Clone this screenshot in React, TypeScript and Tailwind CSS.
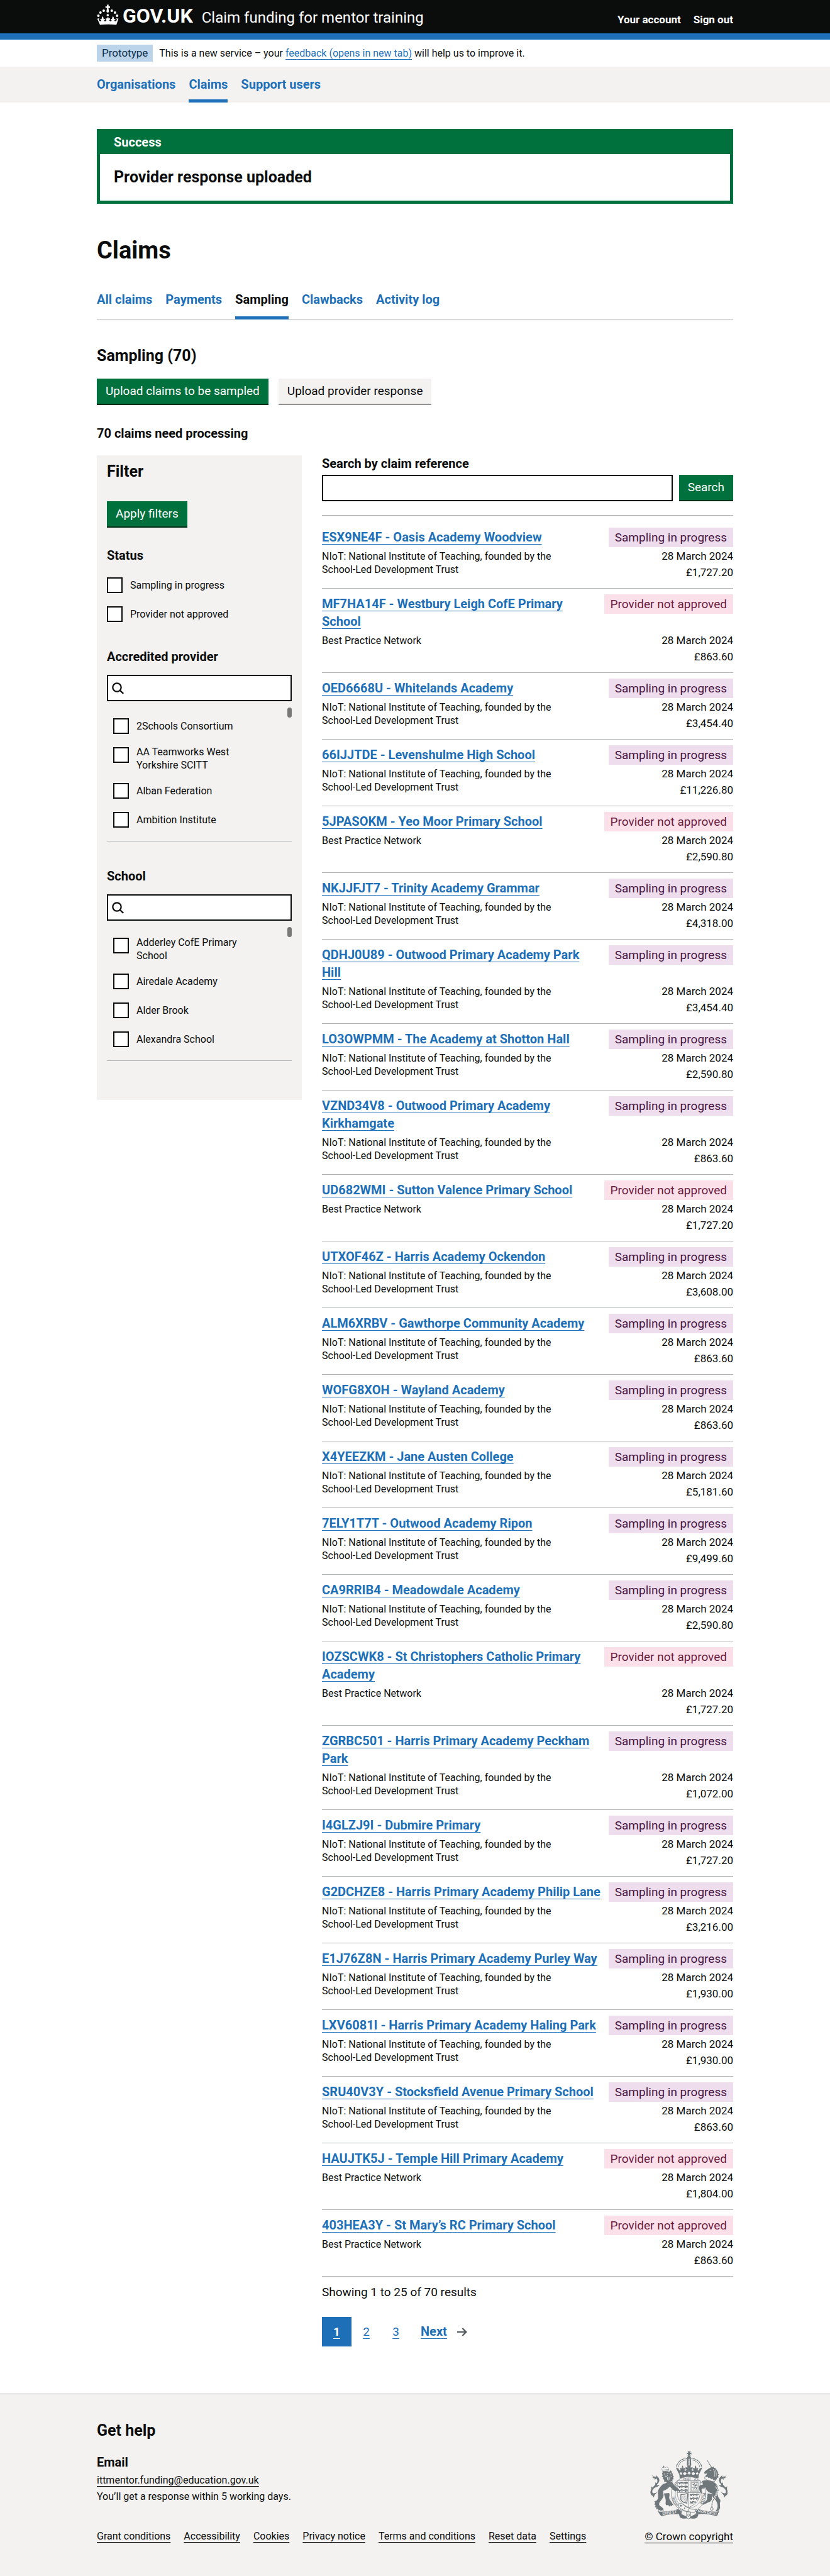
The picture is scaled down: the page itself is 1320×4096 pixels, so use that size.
import type { ReactNode } from "react";

type Status = "progress" | "rejected";
type Claim = { title: string; provider: string; status: Status; amount: string };

const NIOT = "NIoT: National Institute of Teaching, founded by the School-Led Development Trust";
const BPN = "Best Practice Network";

const claims: Claim[] = [
  { title: "ESX9NE4F - Oasis Academy Woodview", provider: NIOT, status: "progress", amount: "£1,727.20" },
  { title: "MF7HA14F - Westbury Leigh CofE Primary\nSchool", provider: BPN, status: "rejected", amount: "£863.60" },
  { title: "OED6668U - Whitelands Academy", provider: NIOT, status: "progress", amount: "£3,454.40" },
  { title: "66IJJTDE - Levenshulme High School", provider: NIOT, status: "progress", amount: "£11,226.80" },
  { title: "5JPASOKM - Yeo Moor Primary School", provider: BPN, status: "rejected", amount: "£2,590.80" },
  { title: "NKJJFJT7 - Trinity Academy Grammar", provider: NIOT, status: "progress", amount: "£4,318.00" },
  { title: "QDHJ0U89 - Outwood Primary Academy Park\nHill", provider: NIOT, status: "progress", amount: "£3,454.40" },
  { title: "LO3OWPMM - The Academy at Shotton Hall", provider: NIOT, status: "progress", amount: "£2,590.80" },
  { title: "VZND34V8 - Outwood Primary Academy\nKirkhamgate", provider: NIOT, status: "progress", amount: "£863.60" },
  { title: "UD682WMI - Sutton Valence Primary School", provider: BPN, status: "rejected", amount: "£1,727.20" },
  { title: "UTXOF46Z - Harris Academy Ockendon", provider: NIOT, status: "progress", amount: "£3,608.00" },
  { title: "ALM6XRBV - Gawthorpe Community Academy", provider: NIOT, status: "progress", amount: "£863.60" },
  { title: "WOFG8XOH - Wayland Academy", provider: NIOT, status: "progress", amount: "£863.60" },
  { title: "X4YEEZKM - Jane Austen College", provider: NIOT, status: "progress", amount: "£5,181.60" },
  { title: "7ELY1T7T - Outwood Academy Ripon", provider: NIOT, status: "progress", amount: "£9,499.60" },
  { title: "CA9RRIB4 - Meadowdale Academy", provider: NIOT, status: "progress", amount: "£2,590.80" },
  { title: "IOZSCWK8 - St Christophers Catholic Primary\nAcademy", provider: BPN, status: "rejected", amount: "£1,727.20" },
  { title: "ZGRBC501 - Harris Primary Academy Peckham\nPark", provider: NIOT, status: "progress", amount: "£1,072.00" },
  { title: "I4GLZJ9I - Dubmire Primary", provider: NIOT, status: "progress", amount: "£1,727.20" },
  { title: "G2DCHZE8 - Harris Primary Academy Philip Lane", provider: NIOT, status: "progress", amount: "£3,216.00" },
  { title: "E1J76Z8N - Harris Primary Academy Purley Way", provider: NIOT, status: "progress", amount: "£1,930.00" },
  { title: "LXV6081I - Harris Primary Academy Haling Park", provider: NIOT, status: "progress", amount: "£1,930.00" },
  { title: "SRU40V3Y - Stocksfield Avenue Primary School", provider: NIOT, status: "progress", amount: "£863.60" },
  { title: "HAUJTK5J - Temple Hill Primary Academy", provider: BPN, status: "rejected", amount: "£1,804.00" },
  { title: "403HEA3Y - St Mary’s RC Primary School", provider: BPN, status: "rejected", amount: "£863.60" },
];

const footerLinks = ["Grant conditions", "Accessibility", "Cookies", "Privacy notice", "Terms and conditions", "Reset data", "Settings"];

function Container({ children, className = "" }: { children: ReactNode; className?: string }) {
  return <div className={`mx-auto w-full max-w-[1012px] ${className}`}>{children}</div>;
}

function Crown() {
  return (
    <svg viewBox="30 36 190 180" className="h-[33px] w-[35px] shrink-0" fill="currentColor" aria-hidden="true">
      <path d="M116 39h17l-3 14c5 1 9 0 13-3v20c-4-3-8-4-13-3l5 29a11 11 0 1 1-22 0l5-29c-5-1-9 0-13 3V50c4 3 8 4 13 3z" />
      <circle cx="124" cy="129" r="10" />
      <circle cx="89" cy="90" r="11" />
      <circle cx="159" cy="90" r="11" />
      <circle cx="61" cy="107" r="11" />
      <circle cx="187" cy="107" r="11" />
      <circle cx="43" cy="134" r="11" />
      <circle cx="205" cy="134" r="11" />
      <path d="M33 160l18-4-4 12c5 18 17 17 21 8 1-6-3-8-9-5-2-10 7-11 13-7-1-9 2-18 8-26 6 8 9 17 8 26 8-4 15-2 13 7-5-3-9-1-8 5 4 11 16 9 22-6-4 0-6 1-8 3v-19c4 4 8 5 13 3l-3-8h16l-3 8c5 2 9 1 13-3v19c-2-2-4-3-8-3 6 15 18 17 22 6 1-6-3-8-8-5-2-9 5-11 13-7-1-9 2-18 8-26 6 8 9 17 8 26 6-4 15-3 13 7-6-3-10-1-9 5 4 9 16 10 21-8l-4-12 18 4-18 53c-47-6-95-6-142 0z" />
    </svg>
  );
}

function CrestHalfCrown() {
  return (
    <g>
      <path d="M268 162C276 120 306 92 358 89" fill="none" stroke="#6f777b" strokeWidth="8" strokeDasharray="1 10" strokeLinecap="round" />
      <path d="M284 164C290 130 314 106 356 101" fill="none" stroke="#6f777b" strokeWidth="5" />
      <path d="M262 168l24 8c2 18 14 22 20 10-10 2-12-12-2-14 8 0 10 6 10 6 0-12 0-20 6-28 7 8 8 16 7 28 0 0 2-6 10-6 12 2 8 16-2 14 4 12 16 14 22-2-8-2-10 2-10 4v-26c6 6 12 6 18 4l-5-16h17v106c-28-4-54-2-81 6l-3-32z" />
      <path d="M292 218c10-12 20-12 26 2-6 14-16 12-22-2zM324 220c8-14 22-16 32-2-6 16-22 18-32 2zM362 216l15-14v28z" fill="#f3f2f1" />
    </g>
  );
}

function CrestTail() {
  return (
    <path d="M50 230L66 244 92 248 90 234 104 246C124 262 124 288 108 304L96 320C104 322 112 320 122 318 112 330 100 334 90 338 72 345 58 360 58 378 60 392 70 392 84 388L104 380C92 392 76 400 72 428L62 412C46 408 38 388 44 370L50 356 48 330 60 342 84 316 86 296 94 304C106 292 106 272 92 262L80 276V262L58 258 68 252z" />
  );
}

function RoyalArms() {
  return (
    <svg viewBox="40 24 670 592" className="h-[109px] w-[123px]" fill="#6f777b" role="img" aria-label="Royal coat of arms">
      <path d="M364 27h28l-6 13c6 2 8 1 11-3v18c-3-4-6-5-12-3l6 14h-27l5-14c-6-2-8-1-11 3V37c3 4 6 5 12 3z" />
      <path d="M361 90a17 17 0 1 1 32 0l3 60h-38z" />
      <path d="M371 92h12v56h-12z" fill="#f3f2f1" />
      <path d="M377 96v50" stroke="#6f777b" strokeWidth="7" strokeDasharray="1 11" strokeLinecap="round" />
      <CrestHalfCrown />
      <g transform="translate(754 0) scale(-1 1)">
        <CrestHalfCrown />
      </g>

      <ellipse cx="373" cy="398" rx="150" ry="152" fill="#f3f2f1" stroke="#6f777b" strokeWidth="4" />
      <ellipse cx="373" cy="398" rx="116" ry="120" fill="none" stroke="#6f777b" strokeWidth="3" />
      <defs>
        <path id="garter" d="M292 494A124 124 0 1 1 452 494" />
      </defs>
      <text fontFamily="Lato, sans-serif" fontSize="32" fontWeight="700">
        <textPath href="#garter" startOffset="1%">HONI</textPath>
        <textPath href="#garter" startOffset="23%">SOIT</textPath>
        <textPath href="#garter" startOffset="43%">QUI</textPath>
        <textPath href="#garter" startOffset="57%">MAL</textPath>
        <textPath href="#garter" startOffset="72%">Y</textPath>
        <textPath href="#garter" startOffset="80%">PENSE</textPath>
      </text>

      <path d="M275 280h197v112c0 56-40 96-97 122-58-26-100-66-100-122z" fill="#f3f2f1" stroke="#6f777b" strokeWidth="4" />
      <path d="M275 385h197M375 280v230" stroke="#6f777b" strokeWidth="4" />
      <g fill="none" stroke="#6f777b" strokeWidth="9" strokeLinejoin="round">
        <path d="M284 296l12 8 16-8 18 6 18-6 18 4M290 310l10-4M318 312l-6-6M340 312l10-6M362 312l-8-8" />
        <path d="M284 328l12 8 16-8 18 6 18-6 18 4M290 342l10-4M318 344l-6-6M340 344l10-6M362 344l-8-8" />
        <path d="M284 360l12 8 16-8 18 6 18-6 18 4M290 374l10-4M318 376l-6-6M340 376l10-6M362 376l-8-8" />
        <path d="M384 398l12 8 16-8 18 6 18-6 14 4M390 412l10-4M418 414l-6-6M440 414l10-6" />
        <path d="M384 430l12 8 16-8 18 6 18-6 10 4M390 444l10-4M418 446l-6-6M440 446l8-6" />
        <path d="M384 462l12 8 16-8 18 6 8-4M390 478l10-6M412 478l-6-6" />
      </g>
      <path d="M424 302l-4 16 14 6-10 14 18 4-6 18M408 312l12 8M440 308l-6 16 14 2M404 340l20-4M414 358l10-14" fill="none" stroke="#6f777b" strokeWidth="6" strokeLinejoin="round" />
      <path d="M388 290h74v86h-74zM396 298h58v70h-58z" fill="none" stroke="#6f777b" strokeWidth="3" />
      <path d="M306 400c20 2 36 0 56-8l4 8-8 76c-20-2-42-10-52-30z" fill="none" stroke="#6f777b" strokeWidth="7" />
      <path d="M312 440l36-36M316 452l40-40M326 460l30-30M338 466l18-18M316 412l34 54M330 406l24 44" stroke="#6f777b" strokeWidth="2" />

      <CrestTail />
      <g transform="translate(755 0) scale(-1 1)">
        <CrestTail />
      </g>

      <path d="M183 300L150 312C125 335 100 365 108 400 112 425 108 440 98 452L76 462 84 474 76 488 88 494 80 510 94 512 92 530 108 526 112 542 124 534 134 546 142 536 158 542 152 522 138 508C120 500 115 490 118 478 128 455 150 440 156 410 158 398 150 385 152 370 175 362 195 350 210 332 228 350 245 368 262 376L266 368 280 374 292 366 284 350C262 340 245 322 232 296L215 285z" />
      <path d="M160 392l44-4c10 18-4 36 4 54l36 54-14-4 2 12-18-8-6 10-12-14-16 2c-12-12-2-30-6-50-2-20-14-34-14-52z" />
      <path d="M142 222L150 206 205 204 218 192 228 204 226 218 240 222 234 234 246 246 238 256 244 268 232 272 234 288 214 284 186 304 178 292 160 288 162 274 148 266 154 252 140 244 150 234z" />
      <path d="M158 224h12M184 220h14M166 240l12 4 14-6M190 252v20c4 8 12 6 14-2v-22M212 216l8 12M218 240l8 10" fill="none" stroke="#f3f2f1" strokeWidth="5" />
      <path d="M148 202l-8-22c2-18 20-20 30-10 12-12 32-6 32 10l-6 18z" fill="#f3f2f1" stroke="#6f777b" strokeWidth="4" strokeDasharray="6 3" />
      <path d="M157 152v18M150 160h14M148 202l50-4M148 190l50-4" stroke="#6f777b" strokeWidth="5" />

      <path d="M534 106l38 60" stroke="#6f777b" strokeWidth="6" strokeDasharray="9 3" />
      <path d="M508 214L514 200C530 192 540 178 556 172L566 168 562 152 576 166 592 158V170L608 172 606 182 622 188 618 198 630 206 624 216 636 228 626 238 634 252 620 258 614 272 600 284 520 246C524 236 532 226 534 218 526 220 520 224 512 222z" />
      <path d="M556 194l14-2M586 182c14 16 18 40 8 66M604 190c10 18 12 36 6 58" fill="none" stroke="#f3f2f1" strokeWidth="4" />
      <path d="M518 238l12 14 8-10 10 18 10-10 10 18 12-8 8 16 16-6-6 20c-32-2-62-10-88-28z" fill="#f3f2f1" stroke="#6f777b" strokeWidth="4" />
      <path d="M488 284c34-10 74-8 104 12 34 18 44 50 34 86-4 20 0 36 14 56 12 12 10 22 4 36l2 44-12 24-28 6 14-24c12-32-2-64-24-86-14-12-24-22-18-46-30-6-52-24-58-52-18 2-34 6-36 18 2 14 0 20 8 26l-8 10-14-22c-8-18-8-42 2-50l28-8z" />
      <path d="M538 392l40 6c-4 12-6 24-2 40-6 16-14 26-34 32l-40 20-8-8 24-22c12-10 18-14 14-28z" />
      <path d="M620 326c-20 12 14 24 8 42-16 26-22 50-34 72-18 14-18 40-20 72" fill="none" stroke="#f3f2f1" strokeWidth="15" />
      <path d="M620 326c-20 12 14 24 8 42-16 26-22 50-34 72-18 14-18 40-20 72" fill="none" stroke="#6f777b" strokeWidth="7" strokeDasharray="15 4" />
      <circle cx="574" cy="526" r="12" fill="#f3f2f1" stroke="#6f777b" strokeWidth="5" />

      <path d="M105 546l22 4c60 0 110-8 156-22l32 18-8 30c-60-12-110 0-172 12z" />
      <path d="M637 546l-22 4c-60 0-110-8-156-22l-26 18 12 28c60-12 110 2 174 14z" />
      <path d="M282 556l28 10c-8 8-8 16-2 24M462 556l-26 10c8 8 8 16 2 24" fill="none" stroke="#6f777b" strokeWidth="4" />
      <path d="M290 574l20-4c24 14 48 14 54 38-28 4-56 2-68-12zM458 574l-24-4c-22 14-46 14-52 38 28 4 60 2 68-12z" />
      <path d="M284 486c8-12 36-6 46 6 26 22 58 40 108 38l-12 24c-60 6-100-16-140-42z" fill="#f3f2f1" stroke="#6f777b" strokeWidth="5" />
      <path d="M356 552h34v34c0 14-8 24-17 28-10-4-18-14-17-28z" fill="#f3f2f1" stroke="#6f777b" strokeWidth="5" />
      <path d="M366 570h14v16c0 8-14 8-14 0z" fill="none" stroke="#6f777b" strokeWidth="4" />
      <circle cx="306" cy="498" r="8" />
      <circle cx="338" cy="520" r="5" />
      <circle cx="370" cy="536" r="5" />
      <g fill="#f3f2f1" fontFamily="Lato, sans-serif" fontWeight="700" fontSize="33">
        <text x="148" y="579" transform="rotate(-8 148 579)">DIEU ET</text>
        <text x="451" y="554" fontSize="29" transform="rotate(9 451 554)">MON DROIT</text>
      </g>
    </svg>
  );
}

function Tag({ status }: { status: Status }) {
  return status === "progress" ? (
    <strong className="block bg-[#eedeed] px-[10px] text-[19px] leading-[31px] font-normal whitespace-nowrap text-[#491644]">Sampling in progress</strong>
  ) : (
    <strong className="block bg-[#fbe0ea] px-[10px] text-[19px] leading-[31px] font-normal whitespace-nowrap text-[#6b1c40]">Provider not approved</strong>
  );
}

function ClaimRow({ claim }: { claim: Claim }) {
  return (
    <li className="grid grid-cols-[1fr_auto] border-b border-[#b1b4b6] pt-[9px] pb-3">
      <h3 className="pt-px pb-[3px] text-[20px] leading-[28px] font-bold whitespace-pre-line">
        <a href="#" className="text-[#1d70b8] underline decoration-1 underline-offset-4">{claim.title}</a>
      </h3>
      <div className="flex items-start justify-end"><Tag status={claim.status} /></div>
      <p className="max-w-[400px] pt-[3px] text-[16px] leading-[21px]">{claim.provider}</p>
      <div className="text-right text-[17px] leading-[26px]">
        <p>28 March 2024</p>
        <p>{claim.amount}</p>
      </div>
    </li>
  );
}

function Check({ id, label, twoLines = false }: { id: string; label: string; twoLines?: boolean }) {
  return (
    <div className="flex items-start gap-3">
      <input id={id} type="checkbox" className="size-[25px] shrink-0 appearance-none border-2 border-[#0b0c0c] bg-white checked:bg-[#0b0c0c]" />
      <label htmlFor={id} className={`text-[16px] leading-[21px] ${twoLines ? "-my-[3px] max-w-[170px]" : "py-[2px]"}`}>{label}</label>
    </div>
  );
}

function SearchableList({ id, title, children }: { id: string; title: string; children: ReactNode }) {
  return (
    <fieldset>
      <legend className="text-[20px] leading-[26px] font-bold">{title}</legend>
      <div className="relative mt-4">
        <svg viewBox="0 0 20 20" className="absolute top-3 left-2 size-[19px]" fill="none" stroke="#0b0c0c" strokeWidth="2.4" aria-hidden="true">
          <circle cx="8.4" cy="8.4" r="7" />
          <path d="M13.2 13.2l6 5.6" />
        </svg>
        <input id={id} type="search" aria-label={`Search ${title}`} className="block h-[42px] w-full appearance-none border-2 border-[#0b0c0c] bg-white pl-8 text-[16px]" />
      </div>
      <div className="relative mt-[10px] border-b border-[#b1b4b6] pt-[17px] pb-[21px] pl-[10px]">
        <span className="absolute top-0 right-0 h-4 w-[7px] rounded-full bg-[#787876]" />
        <div className="flex flex-col gap-[21px]">{children}</div>
      </div>
    </fieldset>
  );
}

export default function App() {
  return (
    <div className="flex min-h-screen flex-col bg-white font-['Roboto','Liberation_Sans',sans-serif] text-[#0b0c0c]">
      <header className="border-b-[10px] border-[#1d70b8] bg-[#0b0c0c] text-white">
        <Container className="flex h-[53px] items-start justify-between pt-[7px]">
          <div className="flex items-start">
            <a href="#" className="flex items-start gap-[6px]">
              <Crown />
              <span className="text-[32px] leading-[37px] font-bold">GOV.UK</span>
            </a>
            <a href="#" className="ml-[14px] pt-px text-[24px] leading-[40px]">Claim funding for mentor training</a>
          </div>
          <nav className="flex gap-5 pt-[11px] text-[17px] leading-[26px] font-bold">
            <a href="#">Your account</a>
            <a href="#">Sign out</a>
          </nav>
        </Container>
      </header>

      <Container className="flex items-center gap-[10px] py-2">
        <strong className="bg-[#bbd4ea] px-2 text-[17px] leading-[27px] font-normal text-[#0c2d4a]">Prototype</strong>
        <p className="text-[16px] leading-[27px]">
          This is a new service – your <a href="#" className="text-[#1d70b8] underline decoration-1 underline-offset-4">feedback (opens in new tab)</a> will help us to improve it.
        </p>
      </Container>

      <div className="bg-[#f3f2f1]">
        <Container>
          <nav className="flex gap-[21px] text-[20px] leading-[26px] font-bold text-[#1d70b8]">
            <a href="#" className="border-b-[5px] border-transparent pt-[15px] pb-[11px]">Organisations</a>
            <a href="#" className="border-b-[5px] border-[#1d70b8] pt-[15px] pb-[11px]">Claims</a>
            <a href="#" className="border-b-[5px] border-transparent pt-[15px] pb-[11px]">Support users</a>
          </nav>
        </Container>
      </div>

      <Container className="pt-[42px]">
        <section className="border-[5px] border-t-0 border-[#00703c]">
          <h2 className="bg-[#00703c] px-[22px] pt-2 pb-[6px] text-[20px] leading-[26px] font-bold text-white">Success</h2>
          <p className="px-[22px] py-[21px] text-[25px] leading-[32px] font-bold">Provider response uploaded</p>
        </section>

        <h1 className="mt-[53px] text-[38px] leading-[42px] font-bold">Claims</h1>

        <nav className="mt-11 flex gap-[21px] text-[20px] leading-[26px] font-bold text-[#1d70b8] shadow-[inset_0_-1px_0_#b1b4b6]">
          <a href="#" className="pb-[19px]">All claims</a>
          <a href="#" className="pb-[19px]">Payments</a>
          <a href="#" className="border-b-[5px] border-[#1d70b8] pb-[14px] text-[#0b0c0c]">Sampling</a>
          <a href="#" className="pb-[19px]">Clawbacks</a>
          <a href="#" className="pb-[19px]">Activity log</a>
        </nav>

        <h2 className="mt-[42px] text-[25px] leading-[32px] font-bold">Sampling (70)</h2>
        <div className="mt-5 flex gap-4 text-[19px] leading-[20px]">
          <button type="button" className="bg-[#00703c] px-[14px] py-[10px] text-white shadow-[0_2px_0_#002d18]">Upload claims to be sampled</button>
          <button type="button" className="bg-[#f3f2f1] px-[14px] py-[10px] shadow-[0_2px_0_#929191]">Upload provider response</button>
        </div>
        <h3 className="mt-[34px] text-[20px] leading-[26px] font-bold">70 claims need processing</h3>

        <div className="mt-[22px] grid grid-cols-[326fr_654fr] items-start gap-8">
          <aside className="bg-[#f3f2f1] px-4 pt-[10px] pb-[62px]">
            <h2 className="text-[25px] leading-[32px] font-bold">Filter</h2>
            <button type="submit" className="mt-[31px] bg-[#00703c] px-[14px] py-[10px] text-[19px] leading-[20px] text-white shadow-[0_2px_0_#002d18]">Apply filters</button>
            <fieldset className="mt-[33px]">
              <legend className="text-[20px] leading-[26px] font-bold">Status</legend>
              <div className="mt-[22px] flex flex-col gap-[21px]">
                <Check id="status-progress" label="Sampling in progress" />
                <Check id="status-rejected" label="Provider not approved" />
              </div>
            </fieldset>
            <div className="mt-[42px] flex flex-col gap-[42px]">
              <SearchableList id="provider-search" title="Accredited provider">
                <Check id="p1" label="2Schools Consortium" />
                <Check id="p2" label="AA Teamworks West Yorkshire SCITT" twoLines />
                <Check id="p3" label="Alban Federation" />
                <Check id="p4" label="Ambition Institute" />
              </SearchableList>
              <SearchableList id="school-search" title="School">
                <Check id="s1" label="Adderley CofE Primary School" twoLines />
                <Check id="s2" label="Airedale Academy" />
                <Check id="s3" label="Alder Brook" />
                <Check id="s4" label="Alexandra School" />
              </SearchableList>
            </div>
          </aside>

          <main>
            <label htmlFor="claim-search" className="block text-[20px] leading-[26px] font-bold">Search by claim reference</label>
            <div className="mt-[5px] flex gap-[10px]">
              <input id="claim-search" type="search" className="h-[42px] min-w-0 flex-1 appearance-none border-2 border-[#0b0c0c] px-2 text-[19px]" />
              <button type="submit" className="h-10 bg-[#00703c] px-[14px] text-[19px] leading-[20px] text-white shadow-[0_2px_0_#002d18]">Search</button>
            </div>
            <ul className="mt-[22px] border-t border-[#b1b4b6] pt-[10px]">
              {claims.map((claim) => (
                <ClaimRow key={claim.title} claim={claim} />
              ))}
            </ul>
            <p className="mt-3 text-[19px] leading-[26px]">Showing 1 to 25 of 70 results</p>
            <nav aria-label="Pagination" className="mt-[26px] flex text-[19px] leading-[47px] text-[#1d70b8]">
              <a href="#" aria-current="page" className="w-[47px] bg-[#1d70b8] text-center font-bold text-white underline decoration-1 underline-offset-4">1</a>
              <a href="#" className="w-[47px] text-center underline decoration-1 underline-offset-4">2</a>
              <a href="#" className="w-[47px] text-center underline decoration-1 underline-offset-4">3</a>
              <a href="#" className="ml-4 flex items-center gap-4 text-[20px] font-bold">
                <span className="underline decoration-1 underline-offset-4">Next</span>
                <svg viewBox="0 0 16 14" className="h-[14px] w-4" fill="none" stroke="#505a5f" strokeWidth="2.2" aria-hidden="true">
                  <path d="M0 7h14M8.4 1l6 6-6 6" />
                </svg>
              </a>
            </nav>
          </main>
        </div>
      </Container>

      <footer className="mt-[75px] grow border-t border-[#b1b4b6] bg-[#f3f2f1] pt-[42px] pb-[49px] text-[16px] leading-[26px]">
        <Container>
          <h2 className="text-[25px] leading-[32px] font-bold">Get help</h2>
          <div className="flex items-end justify-between">
            <div className="pt-[21px]">
              <h3 className="text-[20px] leading-[26px] font-bold">Email</h3>
              <p className="pt-[3px]"><a href="#" className="underline decoration-1 underline-offset-4">ittmentor.funding@education.gov.uk</a></p>
              <p>You’ll get a response within 5 working days.</p>
              <ul className="mt-[37px] flex gap-[21px]">
                {footerLinks.map((link) => (
                  <li key={link}><a href="#" className="underline decoration-1 underline-offset-4">{link}</a></li>
                ))}
              </ul>
            </div>
            <div className="flex flex-col items-center gap-[14px]">
              <RoyalArms />
              <a href="#" className="text-[17px] underline decoration-1 underline-offset-4">© Crown copyright</a>
            </div>
          </div>
        </Container>
      </footer>
    </div>
  );
}
